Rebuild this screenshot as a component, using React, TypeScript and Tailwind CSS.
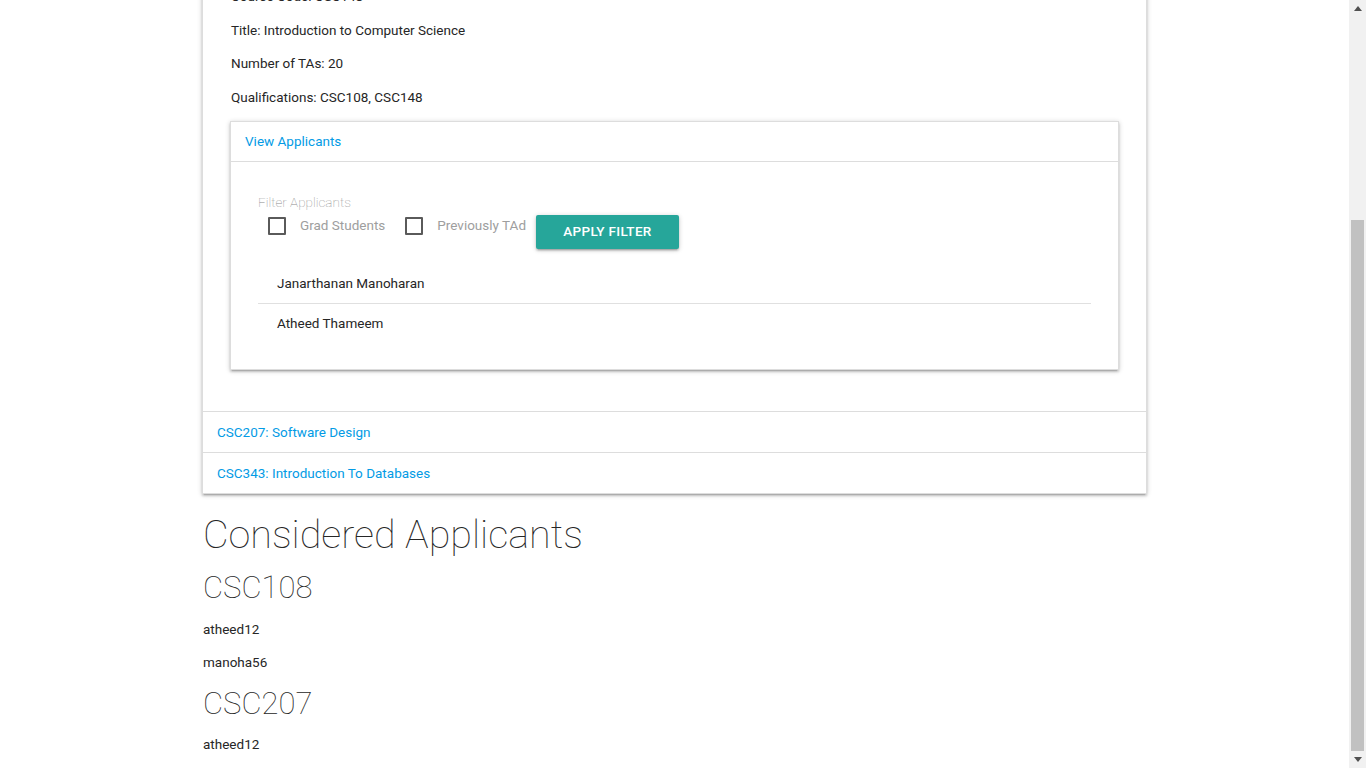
import React from 'react';

const cardShadow =
  'shadow-[0_2px_2px_0_rgba(0,0,0,0.14),0_3px_1px_-2px_rgba(0,0,0,0.12),0_1px_5px_0_rgba(0,0,0,0.2)]';

function Checkbox({ label }: { label: string }) {
  return (
    <label className="flex h-[24px] items-center">
      <span className="h-[18px] w-[18px] border-2 border-[#5a5a5a] rounded-[1px]" />
      <span className="ml-[14px] text-[13.5px] text-[#9e9e9e]">{label}</span>
    </label>
  );
}

function Scrollbar() {
  return (
    <div className="flex w-[17px] shrink-0 flex-col items-center bg-[#f1f1f1]">
      <div className="flex h-[17px] items-center justify-center">
        <svg width="8" height="5" viewBox="0 0 8 5">
          <polygon points="4,0 8,5 0,5" fill="#505050" />
        </svg>
      </div>
      <div className="mt-[203px] h-[531px] w-[13px] bg-[#c1c1c1]" />
      <div className="flex h-[17px] items-center justify-center">
        <svg width="8" height="5" viewBox="0 0 8 5">
          <polygon points="0,0 8,0 4,5" fill="#505050" />
        </svg>
      </div>
    </div>
  );
}

export default function App() {
  const applicants = ['Janarthanan Manoharan', 'Atheed Thameem'];

  return (
    <div className="flex h-screen overflow-hidden bg-white text-[#262626] [font-family:Roboto,sans-serif]">
      <div className="flex-1">
        <div className="mx-auto w-[945px]">
          {/* Courses collapsible */}
          <div className={`border-x border-[#ddd] ${cardShadow}`}>
            <div className="border-b border-[#ddd] px-[27px] pb-[41px]">
              <div className="-mt-[14px] flex flex-col gap-[13.5px] text-[13.5px] leading-[20px]">
                <p className="px-px">Course Code: CSC148</p>
                <p className="px-px">Title: Introduction to Computer Science</p>
                <p className="px-px">Number of TAs: 20</p>
                <p className="px-px">Qualifications: CSC108, CSC148</p>
              </div>

              {/* View applicants */}
              <div className={`mt-[14px] border border-b-0 border-[#ddd] ${cardShadow}`}>
                <div className="flex h-[40px] items-center border-b border-[#ddd] px-[14px] text-[13.5px] text-[#039be5]">
                  View Applicants
                </div>
                <div className="border-b border-[#ddd] px-[27px] pb-[26px] pt-[29px]">
                  <div className="text-[13.5px] font-thin leading-[23px] text-[#8a8a8a]">Filter Applicants</div>
                  <div className="flex items-start pl-[10px]">
                    <Checkbox label="Grad Students" />
                    <div className="ml-[20px]">
                      <Checkbox label="Previously TAd" />
                    </div>
                    <button
                      className={`ml-[10px] mt-[1px] h-[34px] w-[143px] rounded-[2px] bg-[#26a69a] text-[13.5px] font-medium uppercase tracking-[0.3px] text-white ${cardShadow}`}
                    >
                      Apply Filter
                    </button>
                  </div>
                  <ul className="mt-[16px]">
                    {applicants.map((name, i) => (
                      <li
                        key={name}
                        className={`flex h-[39px] items-center pl-[19px] text-[13.5px] ${
                          i < applicants.length - 1 ? 'border-b border-[#e0e0e0]' : ''
                        }`}
                      >
                        {name}
                      </li>
                    ))}
                  </ul>
                </div>
              </div>
            </div>
            <div className="flex h-[41px] items-center border-b border-[#ddd] px-[14px] pt-[1px] text-[13.5px] text-[#039be5]">
              CSC207: Software Design
            </div>
            <div className="flex h-[41px] items-center border-b border-[#ddd] px-[14px] pt-[1px] text-[13.5px] text-[#039be5]">
              CSC343: Introduction To Databases
            </div>
          </div>

          {/* Considered applicants */}
          <div className="pl-px">
            <h3 className="mt-[17px] text-[39.5px] font-thin leading-[48px]">Considered Applicants</h3>
            <h4 className="mt-[11px] text-[31px] font-thin leading-[36px]">CSC108</h4>
            <p className="mt-[13px] text-[13.5px] leading-[20px]">atheed12</p>
            <p className="mt-[13px] text-[13.5px] leading-[20px]">manoha56</p>
            <h4 className="mt-[14px] text-[31px] font-thin leading-[36px]">CSC207</h4>
            <p className="mt-[12px] text-[13.5px] leading-[20px]">atheed12</p>
          </div>
        </div>
      </div>
      <Scrollbar />
    </div>
  );
}
